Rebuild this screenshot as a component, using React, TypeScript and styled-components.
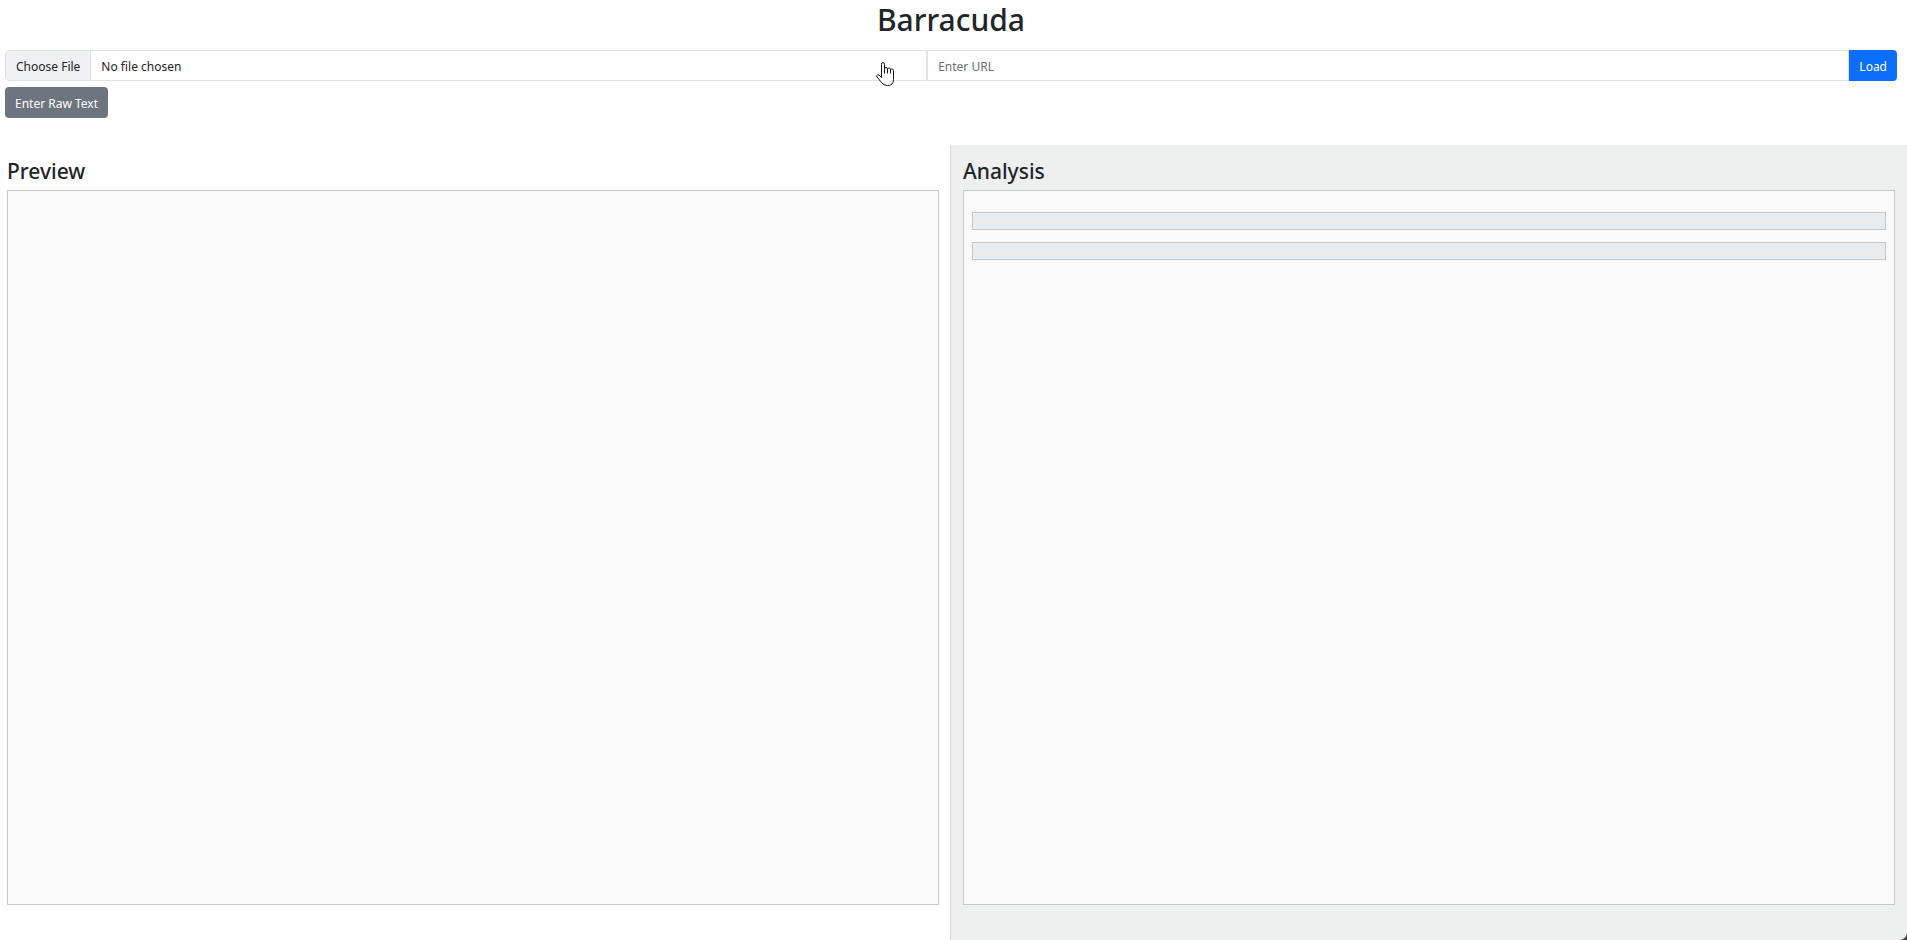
import React from "react";
import styled, { createGlobalStyle } from "styled-components";

const GlobalStyle = createGlobalStyle`
  *, *::before, *::after { box-sizing: border-box; }
  body {
    margin: 0;
    background: #fff;
    color: #212529;
    font-family: "Segoe UI", "Noto Sans", "Open Sans", sans-serif;
    font-size: 12px;
    line-height: 21px;
  }
`;

const Page = styled.div`
  display: flex;
  flex-direction: column;
  min-height: 100vh;
`;

const Header = styled.header`
  padding: 0 10px 27px 5px;
`;

const Title = styled.h1`
  margin: 0 0 10px;
  text-align: center;
  font-size: 30px;
  font-weight: 500;
  line-height: 40px;
`;

const InputGroup = styled.form`
  position: relative;
  display: flex;
  margin-bottom: 6px;
`;

const Field = styled.input`
  flex: 1 1 0;
  min-width: 0;
  height: 31px;
  padding: 5px 10px 4px;
  border: 1px solid #dee2e6;
  background: #fff;
  color: #212529;
  font: inherit;

  &::placeholder { color: #6c7074; opacity: 1; }
`;

const FileField = styled(Field)`
  overflow: hidden;
  border-radius: 4px 0 0 4px;
  cursor: pointer;

  &::file-selector-button {
    margin: -5px 10px -4px -10px;
    padding: 5px 10px 4px;
    border: 0 solid #dee2e6;
    border-right-width: 1px;
    background: #f0f1f2;
    color: #212529;
    font: inherit;
  }
`;

const Button = styled.button<{ $primary?: boolean }>`
  display: block;
  height: 31px;
  padding: 5px 10px 4px;
  border: 0;
  border-radius: ${(p) => (p.$primary ? "0 4px 4px 0" : "4px")};
  background: ${(p) => (p.$primary ? "#0d6efd" : "#6c757d")};
  color: #fff;
  font: inherit;
`;

const Pointer = styled.svg`
  position: absolute;
  left: calc(46% + 1px);
  top: 12px;
  pointer-events: none;
`;

const Columns = styled.main`
  display: flex;
  flex: 1;
`;

const Panel = styled.section<{ $tinted?: boolean }>`
  display: flex;
  flex: 1 1 0;
  flex-direction: column;
  padding: ${(p) => (p.$tinted ? "12px 12px 35px" : "12px 11px 35px 7px")};
  border-left: ${(p) => (p.$tinted ? "1px solid #d5d8d8" : "0")};
  background: ${(p) => (p.$tinted ? "#eef0ef" : "#fff")};
`;

const PanelTitle = styled.h2`
  margin: 0 0 5px;
  font-size: 21px;
  font-weight: 500;
  line-height: 28px;
`;

const PanelBody = styled.div`
  flex: 1;
  padding: 21px 8px;
  border: 1px solid #c8c8c8;
  background: #f9f9f9;
`;

const ResultBar = styled.div`
  height: 18px;
  margin-bottom: 12px;
  border: 1px solid #c8c8c8;
  background: #e8ebee;
`;

const Corner = styled.svg`
  position: fixed;
  right: 0;
  bottom: 0;
`;

export default function App() {
  return (
    <>
      <GlobalStyle />
      <Page>
        <Header>
          <Title>Barracuda</Title>
          <InputGroup onSubmit={(e) => e.preventDefault()}>
            <FileField type="file" aria-label="File" />
            <Field type="text" placeholder="Enter URL" aria-label="URL" />
            <Button $primary type="submit">Load</Button>
            <Pointer width="19" height="25" viewBox="0 0 19 25" aria-hidden="true">
              <path
                d="M5.5 15.5V2.5Q5.5 .5 7 .5T8.500 2.500V7Q8.500 5.500 10 5.500T11.500 7Q12 6 13.200 6T14.500 7.500Q15 7 16.200 7T17.500 8.500V17.500Q17.500 23.500 11.500 23.500Q7.500 23.500 5.500 20.500L1 15Q0 13.500 1.500 12.800T5.500 15.500Z"
                fill="#fff"
                stroke="#16161f"
              />
              <path d="M8.500 6V11.500M11.500 7V11.500M14.500 7.500V11.500" stroke="#16161f" fill="none" />
            </Pointer>
          </InputGroup>
          <Button type="button">Enter Raw Text</Button>
        </Header>
        <Columns>
          <Panel>
            <PanelTitle>Preview</PanelTitle>
            <PanelBody />
          </Panel>
          <Panel $tinted>
            <PanelTitle>Analysis</PanelTitle>
            <PanelBody>
              <ResultBar />
              <ResultBar />
            </PanelBody>
          </Panel>
        </Columns>
      </Page>
      <Corner width="7" height="7" viewBox="0 0 7 7" aria-hidden="true">
        <path d="M7 0Q6 6 0 7H7Z" fill="#4a3a42" />
      </Corner>
    </>
  );
}
